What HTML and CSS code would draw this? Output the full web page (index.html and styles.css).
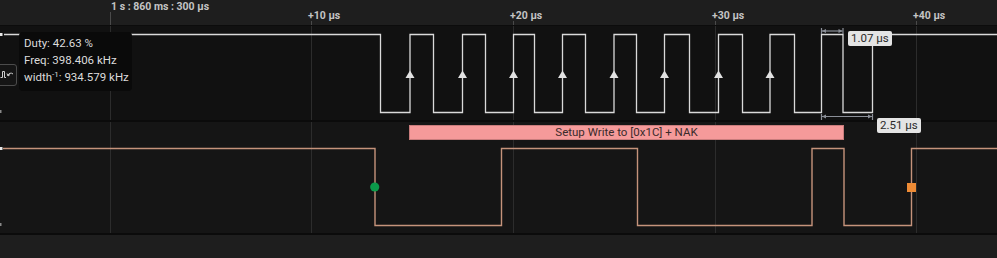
FILE: index.html
```html
<!DOCTYPE html>
<html lang="en">
<head>
  <meta charset="UTF-8" />
  <title>Logic Capture</title>
  <link rel="stylesheet" href="styles.css">
</head>
<body>
  <div class="capture">
    <div class="timebar">
      <div class="tick tick-main" style="left: 110px"><span>1 s : 860 ms : 300 µs</span></div>
      <div class="tick" style="left: 311px"><span>+10 µs</span></div>
      <div class="tick" style="left: 513px"><span>+20 µs</span></div>
      <div class="tick" style="left: 715px"><span>+30 µs</span></div>
      <div class="tick" style="left: 916px"><span>+40 µs</span></div>
    </div>

    <div class="lane lane-clock">
      <svg class="wave" width="997" height="94" viewBox="0 0 997 94">
        <g class="grid">
          <line x1="110.5" y1="0" x2="110.5" y2="94" />
          <line x1="311.5" y1="0" x2="311.5" y2="94" />
          <line x1="513.5" y1="0" x2="513.5" y2="94" />
          <line x1="715.5" y1="0" x2="715.5" y2="94" />
          <line x1="916.5" y1="0" x2="916.5" y2="94" />
        </g>
        <rect x="0" y="7" width="2.5" height="3" fill="#e8e8e8" />
        <rect x="0" y="84" width="1.5" height="3" fill="#888" />
        <path class="clk" d="M4 8.5 H380.5 V86.5 H410 V8.5 H433.5 V86.5 H462.5 V8.5 H485.5 V86.5 H513.5 V8.5 H534.5 V86.5 H562.5 V8.5 H585.5 V86.5 H614 V8.5 H636.5 V86.5 H664.5 V8.5 H689.5 V86.5 H718.5 V8.5 H742.5 V86.5 H770 V8.5 H794.5 V86.5 H821.5 V8.5 H843 V86.5 H872.5 V8.5 H997" />
        <g class="edges">
          <polygon points="405.5,52 410,44.5 414.5,52" />
          <polygon points="458,52 462.5,44.5 467,52" />
          <polygon points="509,52 513.5,44.5 518,52" />
          <polygon points="558,52 562.5,44.5 567,52" />
          <polygon points="609.5,52 614,44.5 618.5,52" />
          <polygon points="660,52 664.5,44.5 669,52" />
          <polygon points="714,52 718.5,44.5 723,52" />
          <polygon points="765.5,52 770,44.5 774.5,52" />
        </g>
        <g class="span">
          <line x1="821.5" y1="2" x2="821.5" y2="8" />
          <line x1="843" y1="2" x2="843" y2="8" />
          <line x1="822" y1="5" x2="842.5" y2="5" />
          <polygon points="822,5 826,3 826,7" />
          <polygon points="842.5,5 838.5,3 838.5,7" />
          <line x1="821.5" y1="88" x2="821.5" y2="94" />
          <line x1="872.5" y1="88" x2="872.5" y2="94" />
          <line x1="822" y1="90.5" x2="872" y2="90.5" />
          <polygon points="822,90.5 826,88.5 826,92.5" />
          <polygon points="872,90.5 868,88.5 868,92.5" />
        </g>
      </svg>
      <button class="edge-btn" title="Trigger">
        <svg width="14" height="12" viewBox="0 0 14 12">
          <path d="M0.5 8.5 H2.5 V2.5 H4.5 V8.5 H6" fill="none" stroke="#cfcfcf" stroke-width="1" />
          <path d="M8 6.5 A3 3 0 0 1 13 5" fill="none" stroke="#cfcfcf" stroke-width="1" />
          <path d="M7 4.5 L8 7 L10 5.5" fill="none" stroke="#cfcfcf" stroke-width="1" />
        </svg>
      </button>
      <div class="stats">
        <div>Duty: 42.63 %</div>
        <div>Freq: 398.406 kHz</div>
        <div>width<sup>-1</sup>: 934.579 kHz</div>
      </div>
    </div>

    <div class="lane lane-data">
      <svg class="wave" width="997" height="111" viewBox="0 0 997 111">
        <g class="grid">
          <line x1="110.5" y1="0" x2="110.5" y2="111" />
          <line x1="311.5" y1="0" x2="311.5" y2="111" />
          <line x1="513.5" y1="0" x2="513.5" y2="111" />
          <line x1="715.5" y1="0" x2="715.5" y2="111" />
          <line x1="916.5" y1="0" x2="916.5" y2="111" />
        </g>
        <rect x="0" y="25" width="2.5" height="3" fill="#e8e8e8" />
        <rect x="0" y="101" width="1.5" height="3" fill="#888" />
        <path class="sda" d="M3 26.5 H375 V103.5 H501.5 V26.5 H637.5 V103.5 H812 V26.5 H844 V103.5 H911.5 V26.5 H997" />
        <circle cx="374.7" cy="65" r="4.6" fill="#0b9a4a" />
        <rect x="907" y="61" width="9" height="9" fill="#ee8b35" />
      </svg>
      <div class="frame">Setup Write to [0x1C] + NAK</div>
    </div>

    <div class="footer"></div>

    <div class="measure m-width">1.07 µs</div>
    <div class="measure m-period">2.51 µs</div>
  </div>
</body>
</html>
```

FILE: styles.css
```css
* {
  box-sizing: border-box;
  margin: 0;
  padding: 0;
}

body {
  background: #1e1e1e;
  font-family: Roboto, 'Liberation Sans', sans-serif;
  overflow: hidden;
}

.capture {
  position: relative;
  width: 997px;
  height: 258px;
  display: flex;
  flex-direction: column;
}

.timebar {
  position: relative;
  height: 26px;
  background: #1e1e1e;
  border-bottom: 1px solid #0c0c0c;
  flex-shrink: 0;
}

.tick {
  position: absolute;
  top: 21px;
  bottom: 0;
  width: 1px;
  background: #4a4a4a;
}

.tick span {
  position: absolute;
  left: -3px;
  top: -11px;
  font-size: 10.5px;
  font-weight: 700;
  color: #c4c4c4;
  white-space: nowrap;
  line-height: 12px;
}

.tick-main {
  top: 12px;
}

.tick-main span {
  left: 1px;
  top: -11px;
}

.lane {
  position: relative;
  flex-shrink: 0;
}

.lane-clock {
  height: 96px;
  background: #111111;
  border-bottom: 2px solid #0b0b0b;
}

.lane-data {
  height: 113px;
  background: #151515;
  border-bottom: 2px solid #0b0b0b;
}

.wave {
  display: block;
}

.grid line {
  stroke: #2c2c2c;
  stroke-width: 1;
}

.clk {
  fill: none;
  stroke: #dadada;
  stroke-width: 1.3;
}

.sda {
  fill: none;
  stroke: #c5937b;
  stroke-width: 1.4;
}

.edges polygon {
  fill: #e2e2e2;
}

.span line {
  stroke: #8b8f98;
  stroke-width: 1.2;
}

.span polygon {
  fill: #8b8f98;
}

.edge-btn {
  position: absolute;
  left: -4px;
  top: 38px;
  width: 21px;
  height: 22px;
  background: #151515;
  border: 1px solid #4c4c4c;
  border-radius: 3px;
  display: flex;
  align-items: center;
  justify-content: flex-end;
  padding-right: 2px;
}

.stats {
  position: absolute;
  left: 19px;
  top: 6px;
  width: 113px;
  height: 59px;
  padding: 3px 0 0 5px;
  background: #0a0a0a;
  border-radius: 4px;
  color: #dcdcdc;
  font-size: 11.5px;
  line-height: 17px;
}

.stats sup {
  font-size: 8px;
  line-height: 0;
  vertical-align: 4px;
}

.frame {
  position: absolute;
  left: 409px;
  top: 3px;
  width: 435px;
  height: 15px;
  background: #f59a9a;
  border: 1px solid #c87c7c;
  color: #3a2b2b;
  font-size: 11.5px;
  line-height: 13px;
  text-align: center;
}

.footer {
  flex: 1;
  background: #1e1e1e;
}

.measure {
  position: absolute;
  height: 15px;
  padding: 0 3px;
  background: #e4e4e4;
  border-radius: 2px;
  color: #2a2a2a;
  font-size: 11.5px;
  line-height: 15px;
  white-space: nowrap;
}

.m-width {
  left: 848px;
  top: 31px;
}

.m-period {
  left: 877px;
  top: 118px;
}
```
